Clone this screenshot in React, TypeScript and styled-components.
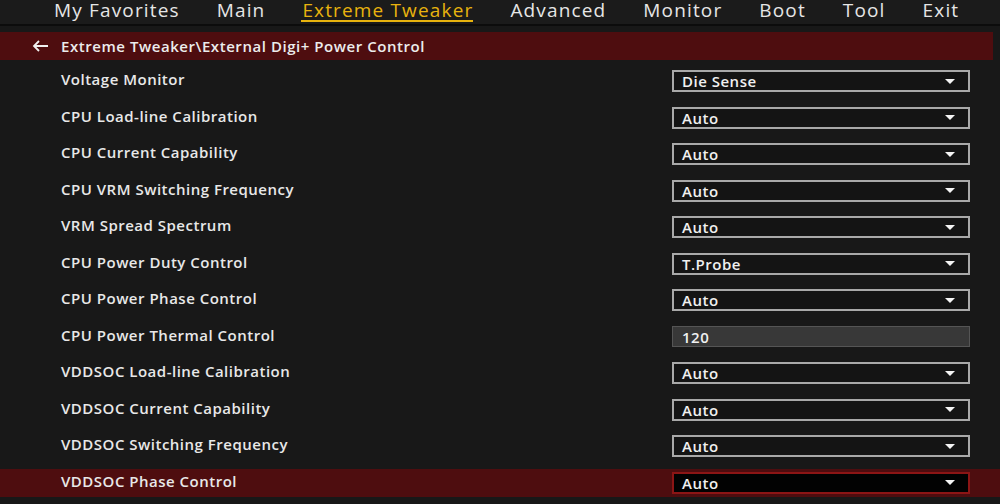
import React from "react";
import styled, { createGlobalStyle } from "styled-components";

const Global = createGlobalStyle`
  html, body { margin: 0; padding: 0; background: #181818; }
  body { width: 1000px; height: 504px; overflow: hidden; font-family: "Open Sans", "Noto Sans", sans-serif; }
`;

const Page = styled.div`
  width: 1000px;
  height: 504px;
  background: #181818;
  display: flex;
  flex-direction: column;
`;

const Nav = styled.nav`
  height: 24px;
  background: #1b1b1b;
  border-bottom: 2px solid #0c0c0c;
  display: flex;
  align-items: flex-start;
  gap: 36px;
  padding-left: 53px;
`;

const NavItem = styled.div<{ $active?: boolean }>`
  font-size: 19px;
  line-height: 20px;
  font-weight: 500;
  letter-spacing: 1.15px;
  color: ${(p) => (p.$active ? "#e8b30e" : "#e6e6e6")};
  border-bottom: 2px solid ${(p) => (p.$active ? "#e8b30e" : "transparent")};
  padding: 0 0 0 1px;
`;

const Crumb = styled.div`
  margin-top: 6px;
  width: 993px;
  height: 28px;
  background: #4e0d0f;
  display: flex;
  align-items: center;
  gap: 12px;
  padding-left: 32px;
  box-sizing: border-box;
  color: #ececec;
  font-size: 15px;
  font-weight: 600;
  letter-spacing: 0.55px;
`;

const List = styled.div`
  margin-top: 7px;
  display: flex;
  flex-direction: column;
  gap: 8.5px;
`;

const Row = styled.div<{ $selected?: boolean }>`
  height: 28px;
  display: flex;
  align-items: center;
  background: ${(p) => (p.$selected ? "#4e0d0f" : "transparent")};
`;

const Label = styled.div`
  flex: 1;
  padding-left: 61px;
  color: #e8e8e8;
  font-size: 15px;
  font-weight: 600;
  letter-spacing: 0.5px;
  margin-top: -4px;
`;

const Select = styled.div<{ $selected?: boolean }>`
  width: 298px;
  height: 22px;
  margin-right: 30px;
  box-sizing: border-box;
  border: 2px solid ${(p) => (p.$selected ? "#8c1515" : "#a9a9a9")};
  background: ${(p) => (p.$selected ? "#020202" : "#141414")};
  display: flex;
  align-items: center;
  justify-content: space-between;
  padding: 0 13px 0 8px;
  color: #f0f0f0;
  font-size: 15px;
  font-weight: 600;
  letter-spacing: 0.5px;
`;

const NumberField = styled.div`
  width: 298px;
  height: 21px;
  margin-right: 30px;
  box-sizing: border-box;
  border: 1px solid #555555;
  background: #383838;
  display: flex;
  align-items: center;
  padding: 0 9px;
  color: #f0f0f0;
  font-size: 15px;
  font-weight: 600;
  letter-spacing: 0.5px;
`;

const Caret = () => (
  <svg width="10" height="5" viewBox="0 0 10 5">
    <polygon points="0,0 10,0 5,5" fill="#f4f4f4" />
  </svg>
);

const BackArrow = () => (
  <svg width="17" height="12" viewBox="0 0 17 12">
    <path d="M16 6H2M7 1L2 6l5 5" stroke="#f0f0f0" strokeWidth="1.8" fill="none" />
  </svg>
);

const navItems = ["My Favorites", "Main", "Extreme Tweaker", "Advanced", "Monitor", "Boot", "Tool", "Exit"];

type Item = { label: string; value: string; kind?: "number" };
const items: Item[] = [
  { label: "Voltage Monitor", value: "Die Sense" },
  { label: "CPU Load-line Calibration", value: "Auto" },
  { label: "CPU Current Capability", value: "Auto" },
  { label: "CPU VRM Switching Frequency", value: "Auto" },
  { label: "VRM Spread Spectrum", value: "Auto" },
  { label: "CPU Power Duty Control", value: "T.Probe" },
  { label: "CPU Power Phase Control", value: "Auto" },
  { label: "CPU Power Thermal Control", value: "120", kind: "number" },
  { label: "VDDSOC Load-line Calibration", value: "Auto" },
  { label: "VDDSOC Current Capability", value: "Auto" },
  { label: "VDDSOC Switching Frequency", value: "Auto" },
  { label: "VDDSOC Phase Control", value: "Auto" },
];

export default function App() {
  return (
    <Page>
      <Global />
      <Nav>
        {navItems.map((n) => (
          <NavItem key={n} $active={n === "Extreme Tweaker"}>
            {n}
          </NavItem>
        ))}
      </Nav>
      <Crumb>
        <BackArrow />
        <span>Extreme Tweaker\External Digi+ Power Control</span>
      </Crumb>
      <List>
        {items.map((it, i) => {
          const sel = i === items.length - 1;
          return (
            <Row key={it.label} $selected={sel}>
              <Label>{it.label}</Label>
              {it.kind === "number" ? (
                <NumberField>{it.value}</NumberField>
              ) : (
                <Select $selected={sel}>
                  <span>{it.value}</span>
                  <Caret />
                </Select>
              )}
            </Row>
          );
        })}
      </List>
    </Page>
  );
}
